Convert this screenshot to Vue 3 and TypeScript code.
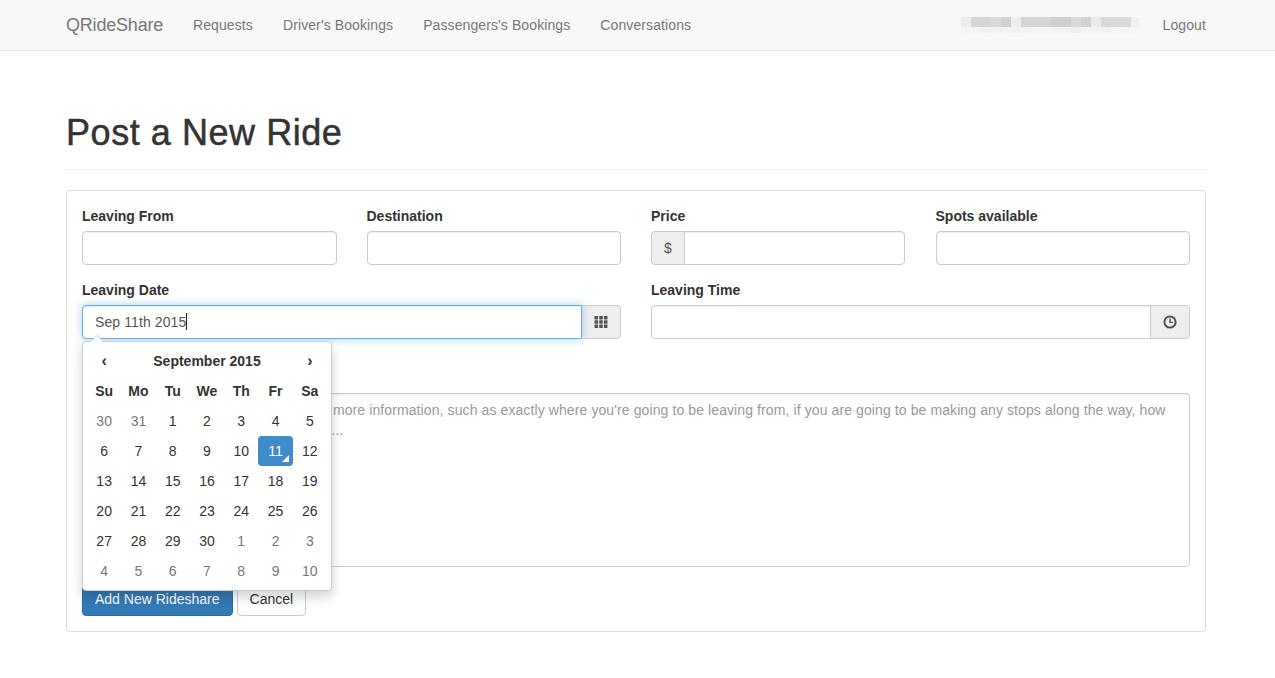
<script setup lang="ts">
const navLinks: string[] = ["Requests", "Driver's Bookings", "Passengers's Bookings", "Conversations"];
const weekdays: string[] = ["Su", "Mo", "Tu", "We", "Th", "Fr", "Sa"];

interface Day { n: number; old?: boolean; active?: boolean }
const flat: Day[] = [
  { n: 30, old: true }, { n: 31, old: true },
  ...Array.from({ length: 30 }, (_, i): Day => ({ n: i + 1, active: i + 1 === 11 })),
  ...Array.from({ length: 10 }, (_, i): Day => ({ n: i + 1, old: true })),
];
const weeks: Day[][] = [];
for (let i = 0; i < flat.length; i += 7) weeks.push(flat.slice(i, i + 7));

const blurTop: string[] = ["#ececec","#d6d6d6","#d6d6d6","#d9d9d9","#d2d2d2","#eeeeee","#d6d6d6","#d6d6d6","#d6d6d6","#cfcfcf","#cfcfcf","#dadada","#d2d2d2","#ebebeb","#d9d9d9","#d9d9d9","#d9d9d9","#f0f0f0"];
const blurBottom: string[] = ["#f5f5f5","#f3f3f3","#f1f1f1","#f2f2f2","#f3f3f3","#f0f0f0","#f2f2f2","#f5f5f5","#f5f5f5","#f3f3f3","#f3f3f3","#efefef","#f3f3f3","#f3f3f3","#f2f2f2","#f5f5f5","#f3f3f3","#f6f6f6"];

const placeholder =
  "Please use this area to provide some more information, such as exactly where you're going to be leaving from, if you are going to be making any stops along the way, how long you're able to wait for others, etc...";
</script>

<template>
  <nav class="navbar">
    <div class="nav-inner">
      <a class="brand">QRideShare</a>
      <a v-for="link in navLinks" :key="link" class="nav-link">{{ link }}</a>
      <div class="nav-right">
        <div class="blur" aria-hidden="true">
          <span v-for="(c, i) in blurTop" :key="'t' + i" class="blur-cell" :style="{ background: c }"></span>
          <span v-for="(c, i) in blurBottom" :key="'b' + i" class="blur-cell" :style="{ background: c }"></span>
        </div>
        <a class="logout">Logout</a>
      </div>
    </div>
  </nav>

  <main class="container">
    <header class="page-header">
      <h1>Post a New Ride</h1>
    </header>

    <form class="panel" @submit.prevent>
      <div class="row four">
        <div class="field">
          <label>Leaving From</label>
          <input class="control" type="text" />
        </div>
        <div class="field">
          <label>Destination</label>
          <input class="control" type="text" />
        </div>
        <div class="field">
          <label>Price</label>
          <div class="group price-group">
            <span class="addon addon-left">$</span>
            <input class="control joined-left" type="text" />
          </div>
        </div>
        <div class="field">
          <label>Spots available</label>
          <input class="control" type="text" />
        </div>
      </div>

      <div class="row two">
        <div class="field date-field">
          <label>Leaving Date</label>
          <div class="group">
            <div class="control joined-right focused">Sep 11th 2015<span class="caret-line"></span></div>
            <span class="addon addon-right">
              <svg width="14" height="14" viewBox="0 0 14 14" fill="currentColor">
                <rect x="0.5" y="1" width="3.6" height="3.4" rx="0.4" />
                <rect x="5.2" y="1" width="3.6" height="3.4" rx="0.4" />
                <rect x="9.9" y="1" width="3.6" height="3.4" rx="0.4" />
                <rect x="0.5" y="5.3" width="3.6" height="3.4" rx="0.4" />
                <rect x="5.2" y="5.3" width="3.6" height="3.4" rx="0.4" />
                <rect x="9.9" y="5.3" width="3.6" height="3.4" rx="0.4" />
                <rect x="0.5" y="9.6" width="3.6" height="3.4" rx="0.4" />
                <rect x="5.2" y="9.6" width="3.6" height="3.4" rx="0.4" />
                <rect x="9.9" y="9.6" width="3.6" height="3.4" rx="0.4" />
              </svg>
            </span>
          </div>

          <div class="picker">
            <table>
              <thead>
                <tr>
                  <th class="arrow">‹</th>
                  <th colspan="5">September 2015</th>
                  <th class="arrow">›</th>
                </tr>
                <tr>
                  <th v-for="d in weekdays" :key="d">{{ d }}</th>
                </tr>
              </thead>
              <tbody>
                <tr v-for="(week, w) in weeks" :key="w">
                  <td v-for="(day, i) in week" :key="i" :class="{ old: day.old, active: day.active && !day.old }">{{ day.n }}</td>
                </tr>
              </tbody>
            </table>
          </div>
        </div>

        <div class="field">
          <label>Leaving Time</label>
          <div class="group">
            <input class="control joined-right" type="text" />
            <span class="addon addon-right">
              <svg width="14" height="14" viewBox="0 0 14 14" fill="none" stroke="currentColor">
                <circle cx="7" cy="7" r="5.6" stroke-width="2" />
                <path d="M7 3.6V7.4H10" stroke-width="1.4" />
              </svg>
            </span>
          </div>
        </div>
      </div>

      <textarea class="control area" aria-label="Description" :placeholder="placeholder"></textarea>

      <div class="actions">
        <button type="submit" class="btn primary">Add New Rideshare</button>
        <button type="button" class="btn">Cancel</button>
      </div>
    </form>
  </main>
</template>

<style>
html, body {
  margin: 0;
  background: #fff;
}
</style>

<style scoped>
* {
  box-sizing: border-box;
}
.navbar {
  height: 51px;
  background: #f8f8f8;
  border-bottom: 1px solid #e7e7e7;
  font: 14px/20px "Liberation Sans", Arial, sans-serif;
}
.nav-inner {
  display: flex;
  align-items: center;
  height: 50px;
  padding: 0 69px 0 66px;
}
.brand {
  width: 112px;
  font-size: 18px;
  letter-spacing: -0.2px;
  color: #777;
}
.nav-link {
  color: #777;
  padding: 0 15px;
  letter-spacing: 0.1px;
}
.nav-right {
  margin-left: auto;
  display: flex;
  align-items: center;
}
.logout {
  color: #777;
  margin-left: 24px;
  letter-spacing: 0.1px;
}
.blur {
  display: grid;
  grid-template-columns: repeat(18, 10px);
  grid-template-rows: 10px 6px;
  width: 178px;
  overflow: hidden;
}
.blur-cell {
  display: block;
}
.container {
  width: 1140px;
  margin-left: 66px;
  color: #333;
  font: 14px/20px "Liberation Sans", Arial, sans-serif;
}
.page-header {
  padding: 62px 0 9px;
  border-bottom: 1px solid #eee;
  margin-bottom: 20px;
}
h1 {
  margin: 0 0 7px;
  font-size: 36px;
  line-height: 40px;
  font-weight: 400;
  letter-spacing: 0.55px;
  -webkit-text-stroke: 0.5px #333;
}
.panel {
  border: 1px solid #ddd;
  border-radius: 4px;
  padding: 15px;
  height: 442px;
}
.row {
  display: grid;
  column-gap: 30px;
  margin-bottom: 15px;
}
.four {
  grid-template-columns: repeat(4, 1fr);
}
.two {
  grid-template-columns: repeat(2, 1fr);
  margin-bottom: 54px;
}
.field {
  min-width: 0;
}
.date-field {
  position: relative;
}
label {
  display: block;
  font-weight: 700;
  margin-bottom: 5px;
}
.control {
  display: block;
  width: 100%;
  height: 34px;
  padding: 6px 12px;
  font: 14px/20px "Liberation Sans", Arial, sans-serif;
  letter-spacing: 0.1px;
  color: #555;
  background: #fff;
  border: 1px solid #ccc;
  border-radius: 4px;
  box-shadow: inset 0 1px 1px rgba(0, 0, 0, 0.075);
  outline: none;
}
.focused {
  border-color: #66afe9;
  box-shadow: inset 0 1px 1px rgba(0, 0, 0, 0.075), 0 0 8px rgba(102, 175, 233, 0.6);
  position: relative;
  z-index: 1;
}
.caret-line {
  display: inline-block;
  width: 1px;
  height: 17px;
  background: #222;
  vertical-align: -3px;
}
.group {
  display: flex;
}
.price-group {
  margin-right: 1px;
}
.group .control {
  flex: 1 1 auto;
  min-width: 0;
}
.joined-left {
  border-radius: 0 4px 4px 0;
}
.joined-right {
  border-radius: 4px 0 0 4px;
}
.addon {
  flex: none;
  display: flex;
  align-items: center;
  justify-content: center;
  height: 34px;
  color: #555;
  background: #eee;
  border: 1px solid #ccc;
}
.addon-left {
  width: 33px;
  border-right: 0;
  border-radius: 4px 0 0 4px;
}
.addon-right {
  width: 40px;
  margin-left: -1px;
  border-radius: 0 4px 4px 0;
}
.picker {
  position: absolute;
  top: 61px;
  left: 0;
  z-index: 5;
  width: 250px;
  padding: 4px;
  background: #fff;
  border: 1px solid #ccc;
  border-radius: 4px;
  box-shadow: 0 6px 12px rgba(0, 0, 0, 0.175);
}
.picker::before {
  content: "";
  position: absolute;
  top: -7px;
  left: 7px;
  border-left: 7px solid transparent;
  border-right: 7px solid transparent;
  border-bottom: 7px solid #ccc;
}
.picker::after {
  content: "";
  position: absolute;
  top: -6px;
  left: 8px;
  border-left: 6px solid transparent;
  border-right: 6px solid transparent;
  border-bottom: 6px solid #fff;
}
table {
  width: 240px;
  border-collapse: collapse;
  table-layout: fixed;
}
th, td {
  height: 30px;
  padding: 0;
  text-align: center;
}
th {
  font-weight: 700;
}
.arrow {
  font-size: 16px;
}
td.old {
  color: #777;
}
td.active {
  position: relative;
  color: #fff;
  background: #428bca;
  border-radius: 4px;
}
td.active::before {
  content: "";
  position: absolute;
  right: 4px;
  bottom: 4px;
  border-left: 7px solid transparent;
  border-bottom: 7px solid #fff;
}
.area {
  height: 174px;
  margin-bottom: 15px;
  resize: none;
}
.area::placeholder {
  color: #999;
  opacity: 1;
}
.actions {
  display: flex;
  gap: 4px;
}
.btn {
  height: 34px;
  padding: 6px 12px;
  font: 14px/20px "Liberation Sans", Arial, sans-serif;
  color: #333;
  background: #fff;
  border: 1px solid #ccc;
  border-radius: 4px;
}
.primary {
  color: #fff;
  background: #337ab7;
  border-color: #2e6da4;
}
</style>
